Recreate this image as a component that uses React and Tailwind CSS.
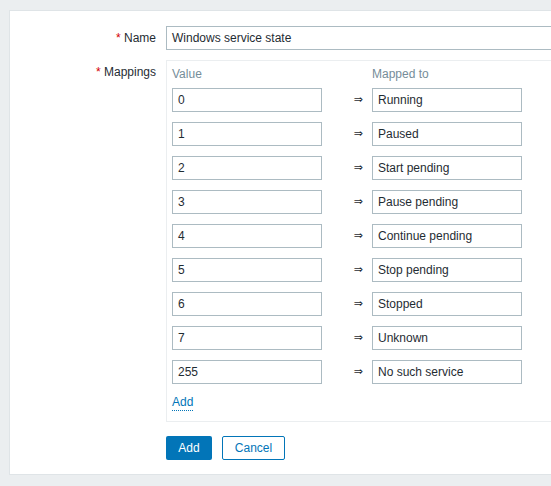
import React from "react";

const rows = [
  ["0", "Running"],
  ["1", "Paused"],
  ["2", "Start pending"],
  ["3", "Pause pending"],
  ["4", "Continue pending"],
  ["5", "Stop pending"],
  ["6", "Stopped"],
  ["7", "Unknown"],
  ["255", "No such service"],
];

function Field({ value }) {
  return (
    <div className="w-[150px] h-[24px] border border-[#acbbc2] bg-white px-[5px] leading-[22px] text-[12px] text-[#1f2c33] whitespace-nowrap overflow-hidden">
      {value}
    </div>
  );
}

export default function App() {
  return (
    <div
      className="w-[551px] h-[486px] overflow-hidden bg-[#ebeef0] pt-[10px] pl-[9px] text-[12px] text-[#1f2c33]"
      style={{ fontFamily: '"Liberation Sans", Arial, sans-serif' }}
    >
      <div className="w-[640px] bg-white border border-[#dfe4e7] pt-[15px] pb-[14px]">
        <div className="flex items-start">
          <div className="w-[146px] h-[24px] leading-[24px] text-right shrink-0">
            <span className="text-[#d40000]">*</span> Name
          </div>
          <div className="ml-[10px] w-[460px] h-[24px] border border-[#acbbc2] px-[5px] leading-[22px]">
            Windows service state
          </div>
        </div>
        <div className="flex items-start mt-[10px]">
          <div className="w-[146px] h-[24px] leading-[24px] text-right shrink-0">
            <span className="text-[#d40000]">*</span> Mappings
          </div>
          <div className="ml-[10px] w-[460px] border border-[#ebeef0] pl-[5px] pt-[5px] pb-[11px]">
            <div className="grid grid-cols-[150px_50px_150px] h-[16px] leading-[16px] text-[#768d99] mb-[6px]">
              <div>Value</div>
              <div></div>
              <div>Mapped to</div>
            </div>
            <div className="flex flex-col gap-[10px]">
              {rows.map(([v, m]) => (
                <div key={v} className="grid grid-cols-[150px_50px_150px] items-center">
                  <Field value={v} />
                  <div className="text-right pr-[9px] text-[11px] leading-[24px] font-['DejaVu_Sans',sans-serif]">
                    ⇒
                  </div>
                  <Field value={m} />
                </div>
              ))}
            </div>
            <div className="mt-[11px] h-[15px] flex">
              <span className="text-[#0275b8] leading-[15px] h-[16px] border-b border-dotted border-[#0275b8] cursor-pointer">
                Add
              </span>
            </div>
          </div>
        </div>
        <div className="flex mt-[14px] ml-[156px] gap-[10px]">
          <button className="w-[46px] h-[24px] bg-[#0275b8] text-white rounded-[2px] text-[12px] leading-[24px]">
            Add
          </button>
          <button className="w-[63px] h-[24px] border border-[#0275b8] text-[#0275b8] bg-white rounded-[2px] text-[12px] leading-[22px]">
            Cancel
          </button>
        </div>
      </div>
    </div>
  );
}
